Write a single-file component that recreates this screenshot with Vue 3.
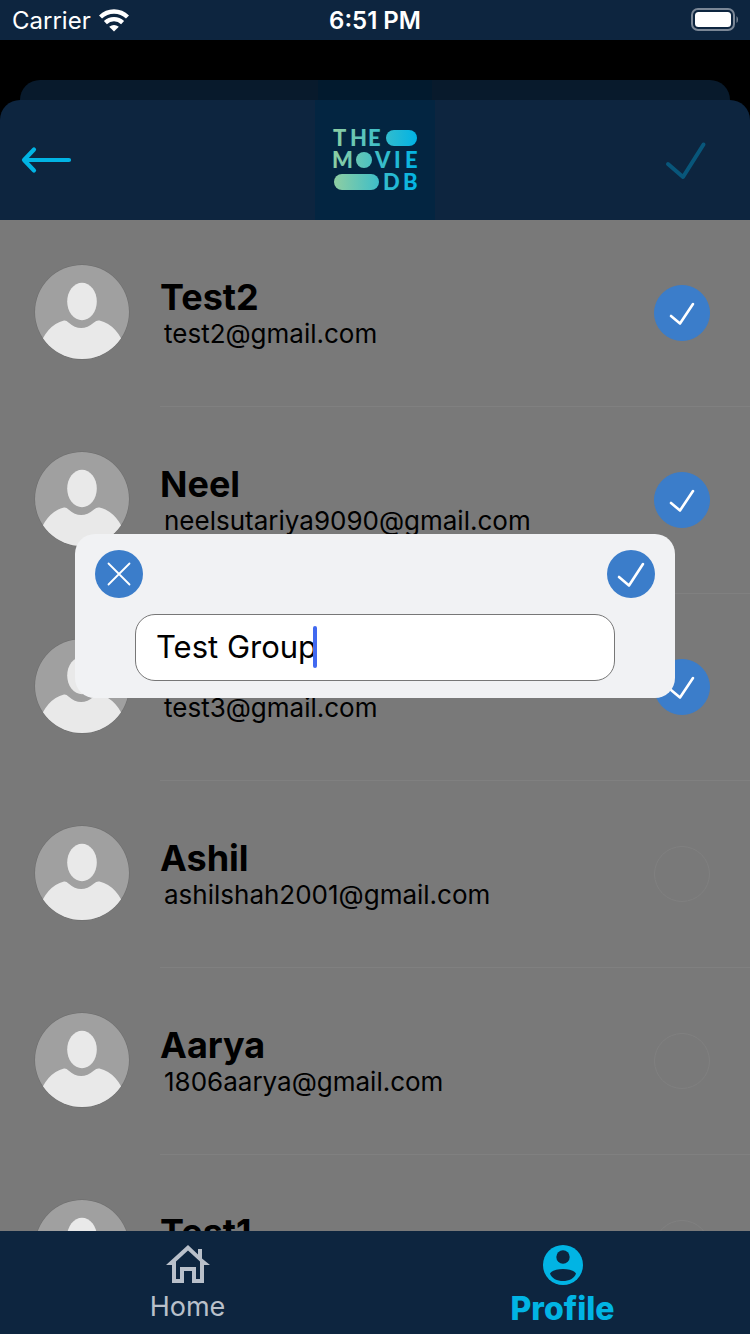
<script setup>
import { ref } from 'vue'

const groupName = ref('Test Group')
const people = ref([
  { name: 'Test2', email: 'test2@gmail.com', picked: true },
  { name: 'Neel', email: 'neelsutariya9090@gmail.com', picked: true },
  { name: 'Test3', email: 'test3@gmail.com', picked: true },
  { name: 'Ashil', email: 'ashilshah2001@gmail.com', picked: false },
  { name: 'Aarya', email: '1806aarya@gmail.com', picked: false },
  { name: 'Test1', email: 'test1@gmail.com', picked: false }
])
</script>

<template>
  <div class="screen">
    <div class="status">
      <div class="carrier">
        <span>Carrier</span>
        <svg width="30" height="23" viewBox="0 0 30 23" aria-hidden="true">
          <g fill="none" stroke="#fff" stroke-width="4.4">
            <path d="M1.5 8A19.5 19.5 0 0 1 28.5 8" />
            <path d="M6.4 13.6A12.5 12.5 0 0 1 23.6 13.6" />
          </g>
          <path d="M10.2 17.8Q15 14 19.8 17.8L15 22.6Z" fill="#fff" />
        </svg>
      </div>
      <span class="clock">6:51 PM</span>
      <div class="power">
        <svg width="48" height="24" viewBox="0 0 48 24" aria-hidden="true">
          <rect x="2" y="1" width="42" height="21" rx="6" fill="none" stroke="#7b8796" stroke-width="2" />
          <rect x="5" y="4" width="36" height="15" rx="3.5" fill="#fff" />
          <path d="M46.500 8Q48 9 48 11.500T46.500 15Z" fill="#7b8796" />
        </svg>
      </div>
    </div>

    <div class="backdrop"><div class="back-sheet"><i class="back-logo"></i></div></div>

    <header class="header">
      <button class="bare" aria-label="Back">
        <svg width="52" height="30" viewBox="0 0 52 30" aria-hidden="true">
          <path d="M14 4.5L4 15L14 25.5M4 15H49" fill="none" stroke="#01b4e4" stroke-width="4.2" stroke-linecap="round" stroke-linejoin="round" />
        </svg>
      </button>
      <svg class="logo" viewBox="0 0 120 120" role="img" aria-label="The Movie DB">
        <defs>
          <linearGradient id="brand" gradientUnits="userSpaceOnUse" x1="18" y1="0" x2="102" y2="0">
            <stop offset="0" stop-color="#90cea1" />
            <stop offset="0.56" stop-color="#3cbec9" />
            <stop offset="1" stop-color="#00b3e5" />
          </linearGradient>
        </defs>
        <rect width="120" height="120" fill="#032541" />
        <g fill="url(#brand)">
          <text class="logo-text" x="18 35 53" y="46">THE</text>
          <rect x="71" y="30" width="31" height="16" rx="8" />
          <text class="logo-text" x="17" y="68">M</text>
          <circle cx="49" cy="60" r="8" />
          <text class="logo-text" x="60 79 90" y="68">VIE</text>
          <rect x="19" y="74" width="45" height="16" rx="8" />
          <text class="logo-text" x="68 88" y="90">DB</text>
        </g>
      </svg>
      <button class="bare done" aria-label="Done" disabled>
        <svg width="44" height="42" viewBox="0 0 44 42" aria-hidden="true">
          <path d="M4 25L19 38L39.500 5.500" fill="none" stroke="#08567a" stroke-width="4" stroke-linecap="round" stroke-linejoin="round" />
        </svg>
      </button>
    </header>

    <main class="list">
      <label v-for="person in people" :key="person.name" class="row">
        <svg class="avatar" viewBox="0 0 96 96" aria-hidden="true">
          <defs>
            <clipPath id="disc"><circle cx="48" cy="48" r="47" /></clipPath>
          </defs>
          <circle cx="48" cy="48" r="47.5" fill="#6c6c6c" />
          <g clip-path="url(#disc)">
            <rect width="96" height="96" fill="#a0a0a0" />
            <ellipse cx="48" cy="37.5" rx="14.8" ry="18.7" fill="#e9e9e9" />
            <path d="M4 86Q12 61 30 56.500Q32.500 56.200 34.500 58.500Q47 69.500 60 58.500Q62.500 56 65.500 56.500Q84 61 92 86V96H4Z" fill="#e9e9e9" />
          </g>
        </svg>
        <span class="body">
          <span class="who">
            <strong class="name">{{ person.name }}</strong>
            <span class="email">{{ person.email }}</span>
          </span>
          <span class="pick">
            <input v-model="person.picked" type="checkbox" />
            <svg v-if="person.picked" viewBox="0 0 56 56" aria-hidden="true">
              <path d="M17 31L26 38.5L39 19" />
            </svg>
          </span>
        </span>
      </label>
    </main>

    <nav class="tabs">
      <a class="tab home" href="#home">
        <svg width="44" height="40" viewBox="0 0 44 40" aria-hidden="true">
          <path fill="#b9c0ca" fill-rule="evenodd" d="M22 0L32 9.5V4H36V13.500L44 20H38V38H26V26H18V38H6V20H0ZM22 5.500L10 16.500V34H14V22H30V34H34V16.500Z" />
        </svg>
        <span>Home</span>
      </a>
      <a class="tab profile" href="#profile" aria-current="page">
        <svg width="40" height="40" viewBox="0 0 40 40" aria-hidden="true">
          <circle cx="20" cy="20" r="20" fill="#01b4e4" />
          <circle cx="20" cy="12" r="6.7" fill="#0d253f" />
          <path d="M7 28.5C10 22.500 30 22.500 33 28.500C30 38.500 10 38.500 7 28.500Z" fill="#0d253f" />
        </svg>
        <span>Profile</span>
      </a>
    </nav>

    <div class="overlay">
      <form class="dialog" role="dialog" aria-label="Group name" @submit.prevent>
        <div class="actions">
          <button class="round" type="button" aria-label="Cancel">
            <svg viewBox="0 0 48 48" aria-hidden="true"><path class="thin" d="M13.5 13.500L34.500 34.500M34.500 13.500L13.500 34.500" /></svg>
          </button>
          <button class="round" type="submit" aria-label="Save">
            <svg viewBox="0 0 48 48" aria-hidden="true"><path d="M12 27L22 35.5L36 14" /></svg>
          </button>
        </div>
        <div class="field">
          <input v-model="groupName" type="text" aria-label="Group name" />
          <i class="caret"></i>
        </div>
      </form>
    </div>
  </div>
</template>

<style>
body {
  margin: 0;
  background: #000;
}
</style>

<style scoped>
.screen {
  display: flex;
  flex-direction: column;
  height: 100vh;
  overflow: hidden;
  background: #000;
  color: #000;
  font-family: Inter, "Liberation Sans", sans-serif;
}
.status {
  display: grid;
  grid-template-columns: 1fr auto 1fr;
  align-items: center;
  height: 40px;
  flex: none;
  padding: 0 12px;
  background: #0d253f;
  color: #fff;
  font-size: 24px;
}
.carrier {
  display: flex;
  align-items: center;
  gap: 8px;
}
.clock {
  font-weight: 600;
}
.power {
  display: flex;
  justify-content: flex-end;
}
.backdrop {
  flex: none;
  padding: 40px 20px 0;
}
.back-sheet {
  display: flex;
  justify-content: center;
  height: 20px;
  border-radius: 20px 20px 0 0;
  background: #081a2c;
}
.back-logo {
  width: 114px;
  background: #021a2e;
}
.header {
  display: grid;
  flex: none;
  grid-template-columns: 1fr auto 1fr;
  align-items: center;
  padding: 0 20px;
  border-radius: 20px 20px 0 0;
  background: #0d253f;
}
.logo {
  width: 120px;
  height: 120px;
  display: block;
}
.logo-text {
  font-family: Lato, sans-serif;
  font-weight: 900;
  font-size: 22px;
}
.bare {
  display: flex;
  padding: 0;
  border: 0;
  background: none;
}
.done {
  justify-self: end;
  margin-right: 22px;
}
.list {
  flex: 1;
  min-height: 0;
  overflow: hidden;
  background: #797979;
}
.row {
  display: flex;
  align-items: center;
  height: 187px;
  padding-left: 34px;
}
.avatar {
  flex: none;
  width: 96px;
  height: 96px;
  margin: 0 30px 4px 0;
}
.body {
  flex: 1;
  display: flex;
  align-items: center;
  justify-content: space-between;
  height: 100%;
  box-sizing: border-box;
  padding-right: 40px;
  border-bottom: 1px solid #808080;
}
.who {
  display: flex;
  flex-direction: column;
}
.name {
  font-size: 36px;
  line-height: 42px;
  font-weight: 700;
}
.email {
  padding-left: 4px;
  font-size: 26px;
  line-height: 32px;
}
.pick {
  position: relative;
  display: flex;
}
.pick input {
  appearance: none;
  width: 56px;
  height: 56px;
  margin: 0;
  border: 1px solid #808080;
  border-radius: 50%;
}
.pick input:checked {
  border-color: #3b7dca;
  background: #3b7dca;
}
.pick svg {
  position: absolute;
  inset: 0;
  pointer-events: none;
}
.pick path,
.round path {
  fill: none;
  stroke: #fff;
  stroke-width: 2.6;
  stroke-linecap: round;
  stroke-linejoin: round;
}
.round .thin {
  stroke-width: 1.8;
}
.tabs {
  flex: none;
  display: grid;
  grid-template-columns: 1fr 1fr;
  height: 103px;
  background: #0d253f;
}
.tab {
  display: flex;
  flex-direction: column;
  align-items: center;
  padding-top: 14px;
  gap: 4px;
  text-decoration: none;
  line-height: 36px;
}
.home {
  color: #b9c0ca;
  font-size: 27px;
}
.profile {
  color: #01b4e4;
  font-size: 32px;
  font-weight: 800;
  line-height: 40px;
}
.overlay {
  position: fixed;
  inset: 0;
  display: flex;
  align-items: center;
  justify-content: center;
  padding-bottom: 102px;
}
.dialog {
  box-sizing: border-box;
  width: 80%;
  padding: 16px 20px 17px;
  border-radius: 20px;
  background: #f1f2f4;
}
.actions {
  display: flex;
  justify-content: space-between;
}
.round {
  width: 48px;
  height: 48px;
  padding: 0;
  border: 0;
  border-radius: 50%;
  background: #3b7dca;
}
.round svg {
  display: block;
}
.field {
  position: relative;
  margin: 16px 40px 0;
}
.field input {
  display: block;
  box-sizing: border-box;
  width: 100%;
  height: 67px;
  padding: 0 20px 3px;
  border: 1px solid #777;
  border-radius: 20px;
  outline: none;
  background: #fff;
  color: #000;
  font: inherit;
  font-size: 31px;
}
.caret {
  position: absolute;
  left: 178px;
  top: 12px;
  width: 4px;
  height: 42px;
  border-radius: 2px;
  background: #4169f0;
}
</style>
